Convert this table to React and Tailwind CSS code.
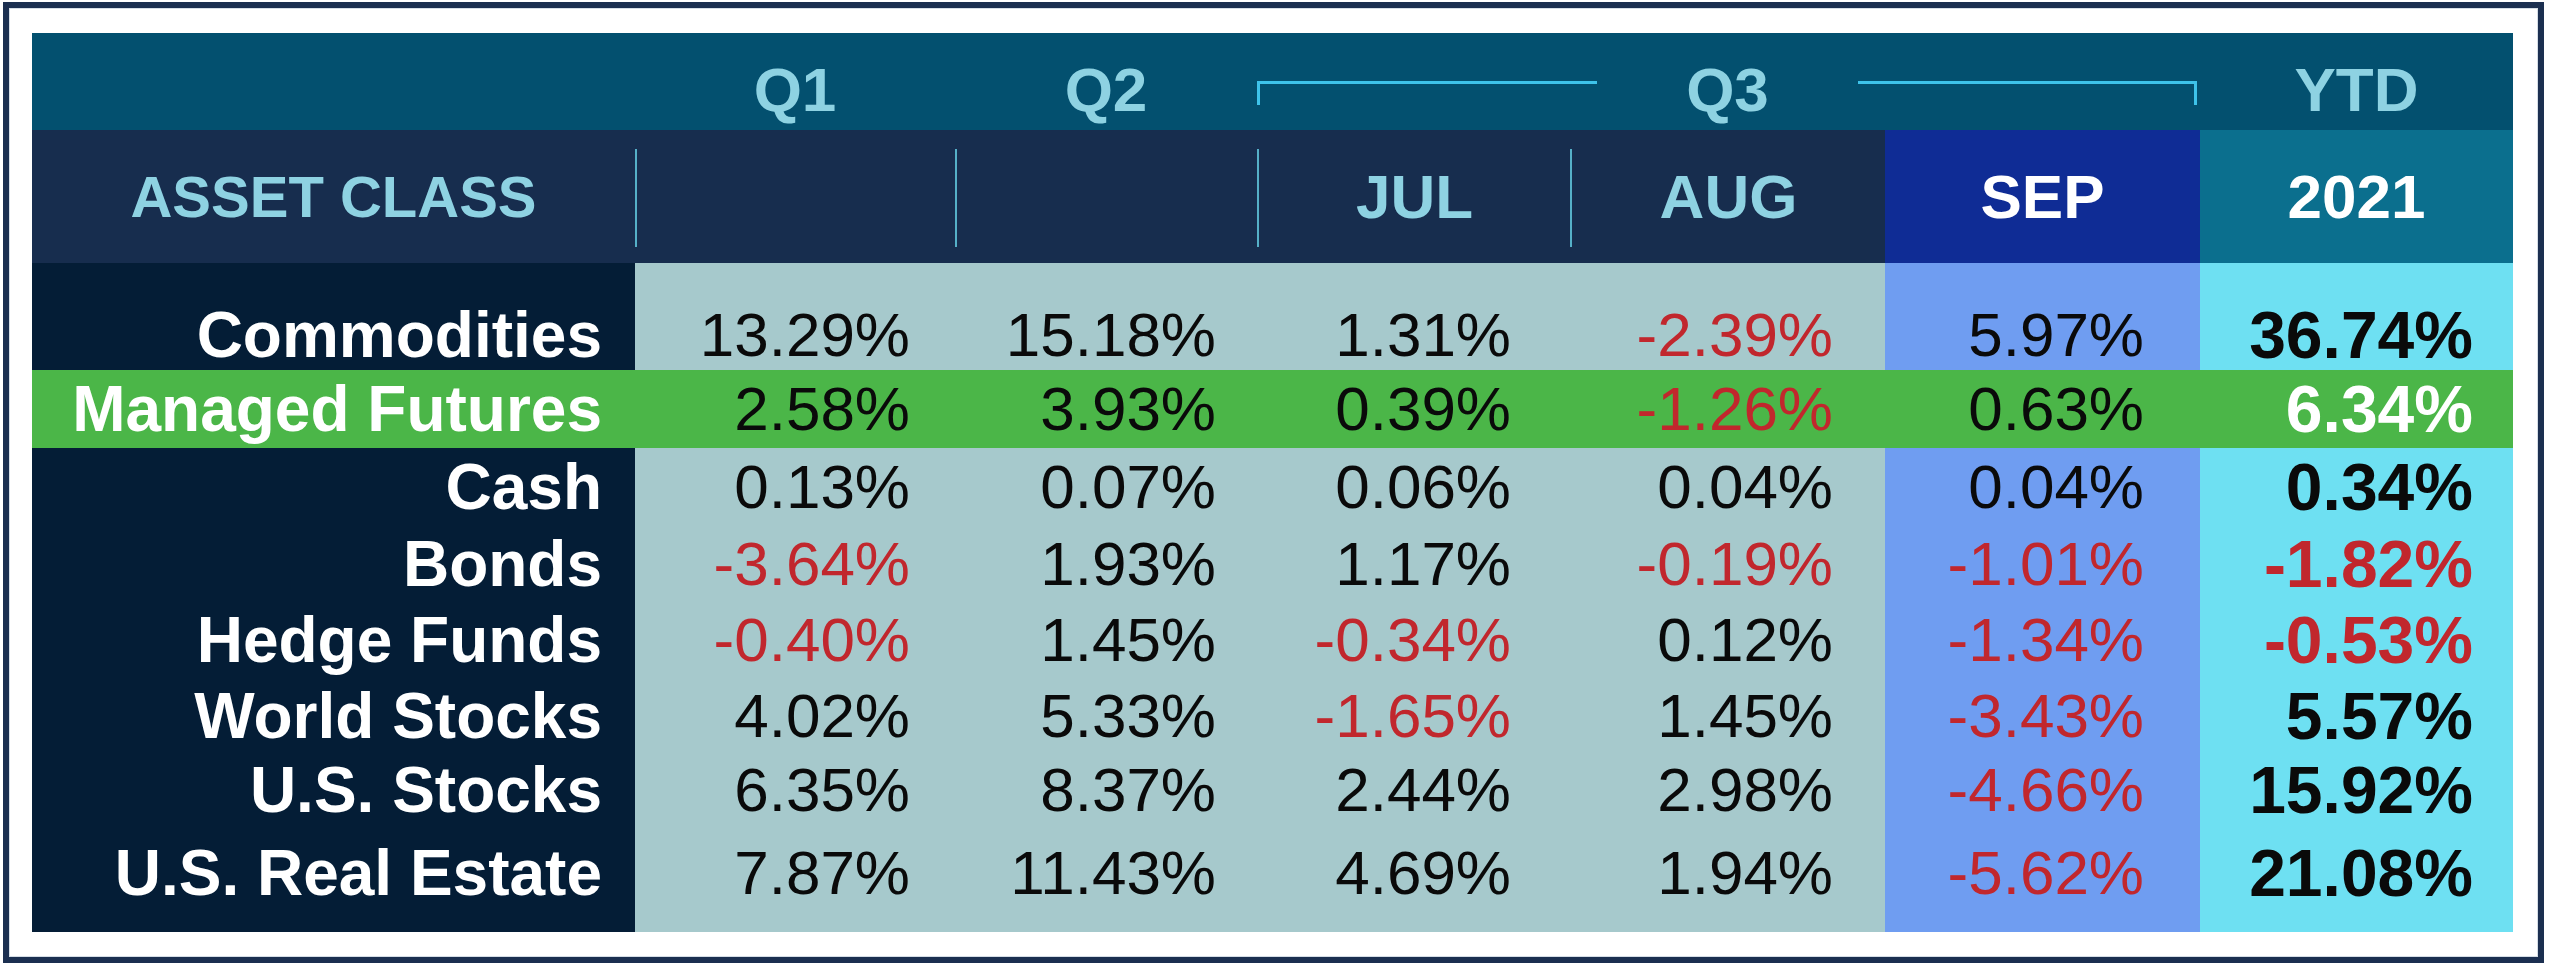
const rows = [
  { name: 'Commodities', vals: ['13.29%', '15.18%', '1.31%', '-2.39%', '5.97%'], ytd: '36.74%', h: 'h-[107px]', pad: 'pt-[37px]' },
  { name: 'Managed Futures', vals: ['2.58%', '3.93%', '0.39%', '-1.26%', '0.63%'], ytd: '6.34%', h: 'h-[78px]', pad: '', green: true },
  { name: 'Cash', vals: ['0.13%', '0.07%', '0.06%', '0.04%', '0.04%'], ytd: '0.34%', h: 'h-[78px]', pad: '' },
  { name: 'Bonds', vals: ['-3.64%', '1.93%', '1.17%', '-0.19%', '-1.01%'], ytd: '-1.82%', h: 'h-[76px]', pad: '' },
  { name: 'Hedge Funds', vals: ['-0.40%', '1.45%', '-0.34%', '0.12%', '-1.34%'], ytd: '-0.53%', h: 'h-[76px]', pad: '' },
  { name: 'World Stocks', vals: ['4.02%', '5.33%', '-1.65%', '1.45%', '-3.43%'], ytd: '5.57%', h: 'h-[75px]', pad: '' },
  { name: 'U.S. Stocks', vals: ['6.35%', '8.37%', '2.44%', '2.98%', '-4.66%'], ytd: '15.92%', h: 'h-[74px]', pad: '' },
  { name: 'U.S. Real Estate', vals: ['7.87%', '11.43%', '4.69%', '1.94%', '-5.62%'], ytd: '21.08%', h: 'h-[105px]', pad: 'pb-[13px]' },
];

// month / quarter columns in the body
const cols = [
  { w: 'w-[320px]', pr: 'pr-[45px]', bg: 'bg-[#a6c9cc]' },
  { w: 'w-[302px]', pr: 'pr-[41px]', bg: 'bg-[#a6c9cc]' },
  { w: 'w-[313px]', pr: 'pr-[59px]', bg: 'bg-[#a6c9cc]' },
  { w: 'w-[315px]', pr: 'pr-[52px]', bg: 'bg-[#a6c9cc]' },
  { w: 'w-[315px]', pr: 'pr-[56px]', bg: 'bg-[#6f9df1]' },
];

const font = { fontFamily: '"Liberation Sans", Arial, sans-serif' };

const Sep = () => <div className="w-[2px] h-[98px] bg-[#55b0c8] shrink-0 mt-[2px]"></div>;

const HeaderTop = () => (
  <div className="flex h-[97px] bg-[#03506f] pt-[16px] text-[62px] leading-none font-bold text-[#8ed2e2]">
    <div className="w-[603px]"></div>
    <div className="w-[320px] flex items-center justify-center">Q1</div>
    <div className="w-[302px] flex items-center justify-center">Q2</div>
    <div className="w-[943px] flex items-center pr-[3px]">
      <div className="self-start mt-[32px] w-[340px] h-[24px] border-l-[3px] border-t-[3px] border-[#3ec3ea]"></div>
      <div className="flex-1 text-center">Q3</div>
      <div className="self-start mt-[32px] w-[339px] h-[24px] border-r-[3px] border-t-[3px] border-[#3ec3ea]"></div>
    </div>
    <div className="w-[313px] flex items-center justify-center">YTD</div>
  </div>
);

const HeaderBottom = () => (
  <div className="flex h-[133px] bg-[#172d4e] text-[62px] leading-none font-bold text-[#8ed2e2]">
    <div className="w-[603px] flex items-center justify-center text-[58px]">ASSET CLASS</div>
    <div className="w-[320px] flex items-center">
      <Sep />
      <div className="flex-1"></div>
    </div>
    <div className="w-[302px] flex items-center">
      <Sep />
      <div className="flex-1"></div>
    </div>
    <div className="w-[313px] flex items-center">
      <Sep />
      <div className="flex-1 text-center">JUL</div>
    </div>
    <div className="w-[315px] flex items-center">
      <Sep />
      <div className="flex-1 text-center">AUG</div>
    </div>
    <div className="w-[315px] flex items-center justify-center bg-[#0f2c95] text-white">SEP</div>
    <div className="w-[313px] flex items-center justify-center bg-[#0b6f8e] text-white">2021</div>
  </div>
);

const BodyRow = ({ row }) => {
  const g = row.green;
  const ytdNeg = row.ytd.startsWith('-');
  return (
    <div className={`flex ${row.h} ${g ? 'bg-[#4bb648]' : ''}`}>
      <div className={`w-[603px] ${row.pad} flex items-center justify-end pr-[33px] text-[64px] leading-none font-bold text-white ${g ? '' : 'bg-[#041d36]'}`}>
        {row.name}
      </div>
      {row.vals.map((v, i) => (
        <div
          key={i}
          className={`${cols[i].w} ${cols[i].pr} ${row.pad} flex items-center justify-end text-[62px] leading-none ${g ? '' : cols[i].bg} ${v.startsWith('-') ? 'text-[#c1272d]' : 'text-[#0a0a0a]'}`}
        >
          {v}
        </div>
      ))}
      <div
        className={`w-[313px] pr-[40px] ${row.pad} flex items-center justify-end text-[66px] leading-none font-bold ${g ? 'text-white' : 'bg-[#6ee0f2]'} ${!g && ytdNeg ? 'text-[#c1272d]' : ''} ${!g && !ytdNeg ? 'text-[#0a0a0a]' : ''}`}
      >
        {row.ytd}
      </div>
    </div>
  );
};

export default function App() {
  return (
    <div className="w-[2560px] h-[966px] bg-white overflow-hidden" style={font}>
      <div className="ml-[3px] mt-[2px] w-[2541px] h-[961px] border-[6px] border-[#1b2f50] pl-[23px] pt-[25px] shadow-[inset_0_0_0_1px_#d5dde5]">
        <div className="w-[2481px]">
          <HeaderTop />
          <HeaderBottom />
          {rows.map((r) => (
            <BodyRow key={r.name} row={r} />
          ))}
        </div>
      </div>
    </div>
  );
}
